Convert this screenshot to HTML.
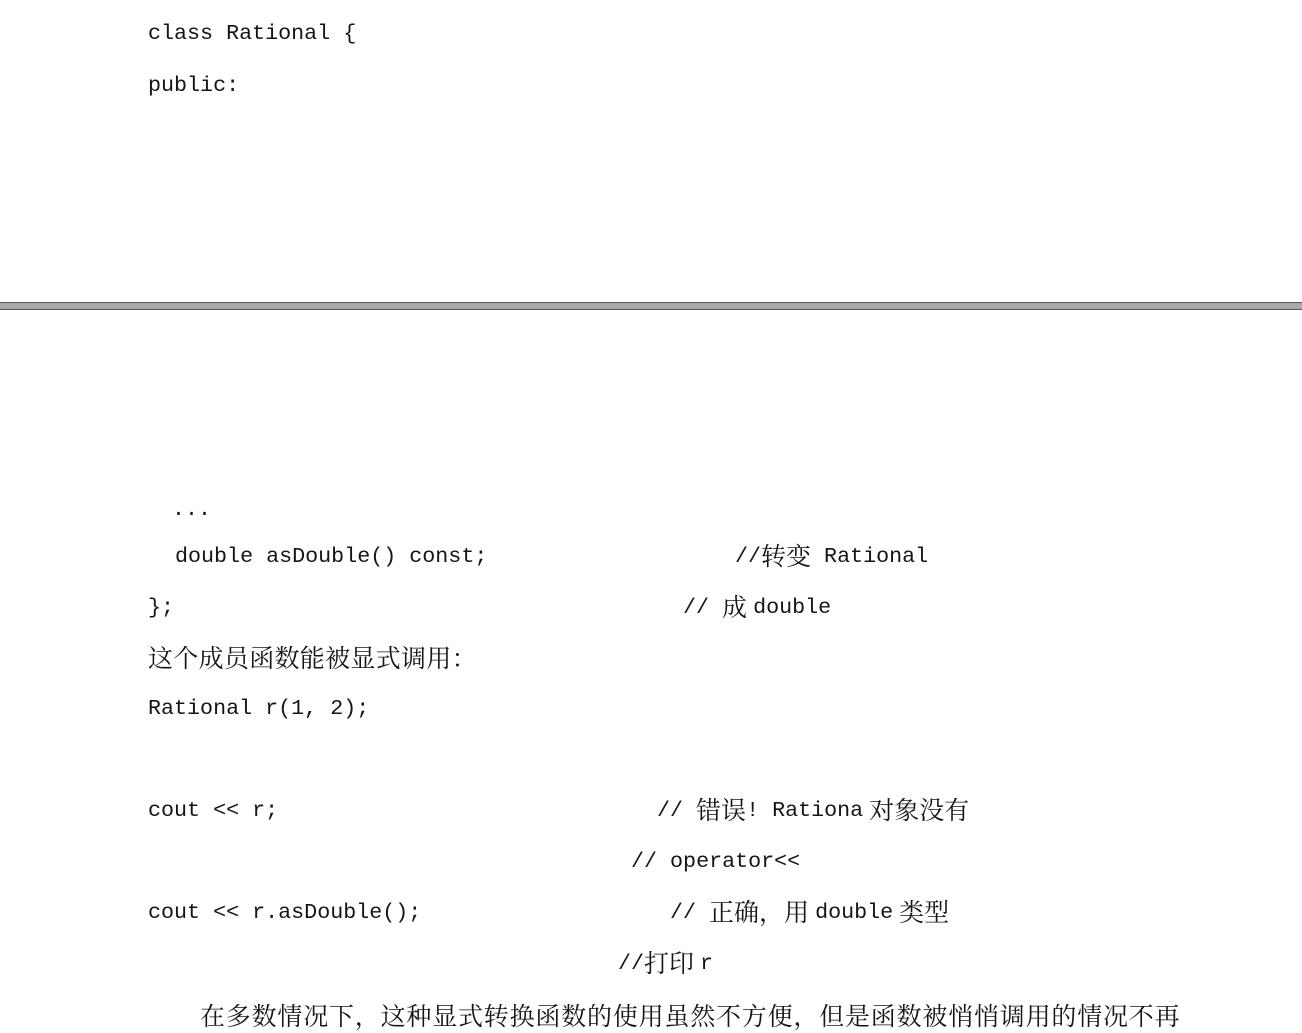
<!DOCTYPE html>
<html><head><meta charset="utf-8"><style>
html,body{margin:0;padding:0;background:#fff;}
body{width:1302px;height:1012px;position:relative;overflow:hidden;}
.l{position:absolute;white-space:pre;font-family:"Liberation Mono",monospace;font-size:21.7px;line-height:26px;height:26px;color:#151515;}
.c{font-family:"Noto Serif CJK SC","Noto Sans CJK SC",serif;font-size:25px;line-height:0;position:relative;top:3px;}
.m{margin:0 4px;}
.sep{position:absolute;left:0;width:1302px;top:302px;height:8px;background:#aaa;border-top:1px solid #555;border-bottom:1px solid #555;box-sizing:border-box;}
</style></head><body>
<div class="l" style="left:148px;top:21px">class Rational {</div>
<div class="l" style="left:148px;top:73px">public:</div>
<div class="sep"></div>
<div class="l" style="left:172px;top:497px">...</div>
<div class="l" style="left:175px;top:544px">double asDouble() const;</div>
<div class="l" style="left:735px;top:544px">//<span class="c">转变</span> Rational</div>
<div class="l" style="left:148px;top:595px">};</div>
<div class="l" style="left:683px;top:595px">// <span class="c" style="margin-right:6px">成</span>double</div>
<div class="l" style="left:148px;top:646px"><span class="c" style="letter-spacing:0.3px">这个成员函数能被显式调用：</span></div>
<div class="l" style="left:148px;top:696px">Rational r(1, 2);</div>
<div class="l" style="left:148px;top:798px">cout &lt;&lt; r;</div>
<div class="l" style="left:657px;top:798px">// <span class="c">错误</span>! Rationa<span class="c" style="margin-left:6px">对象没有</span></div>
<div class="l" style="left:631px;top:849px">// operator&lt;&lt;</div>
<div class="l" style="left:148px;top:900px">cout &lt;&lt; r.asDouble();</div>
<div class="l" style="left:670px;top:900px">// <span class="c" style="margin-right:6px">正确，用</span>double<span class="c" style="margin-left:6px">类型</span></div>
<div class="l" style="left:618px;top:951px">//<span class="c" style="margin-right:6px">打印</span>r</div>
<div class="l" style="left:200px;top:1004px"><span class="c" style="letter-spacing:0.8px">在多数情况下，这种显式转换函数的使用虽然不方便，但是函数被悄悄调用的情况不再</span></div>
</body></html>
